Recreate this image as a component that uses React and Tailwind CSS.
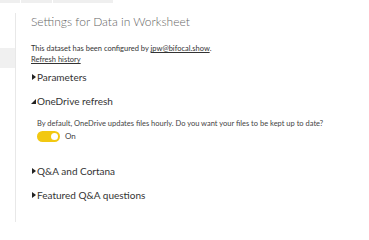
function Caret({ open }) {
  return (
    <svg width="5" height="6" viewBox="0 0 5 6" className="mr-[1px] shrink-0">
      {open ? <polygon points="5,1 5,6 0,6" fill="#222" /> : <polygon points="1,0 5,3 1,6" fill="#222" />}
    </svg>
  )
}

export default function App() {
  const font = { fontFamily: '"Segoe UI", Lato, sans-serif' }

  return (
    <div className="w-[369px] h-[222px] bg-white overflow-hidden flex flex-col" style={font}>
      {/* top tabs strip */}
      <div className="flex h-[3px] gap-px">
        <div className="w-[20px] bg-[#efefef]" />
        <div className="w-[31px] bg-[#efefef]" />
        <div className="w-[60px] bg-[#efefef]" />
      </div>

      <div className="flex flex-1 mt-[10px]">
        {/* left nav */}
        <div className="w-[16px] border-r border-[#e8e8e8]">
          <div className="mt-[35px] h-[20px] w-[15px] bg-[#f0f0f0]" />
        </div>

        {/* settings panel */}
        <div className="pl-[15px] text-[#333]">
          <h1 className="text-[12px] leading-[18px] font-light text-[#666]">Settings for Data in Worksheet</h1>
          <p className="mt-[12px] text-[7.5px] leading-[11px] text-[#333]">
            This dataset has been configured by <span className="underline">jpw@bifocal.show</span>.
          </p>
          <p className="text-[7.5px] leading-[11px] underline text-[#333]">Refresh history</p>

          <div className="mt-[5px] flex items-center h-[14px] text-[10px] text-[#333]">
            <Caret />Parameters
          </div>

          <div className="mt-[10px] flex items-center h-[14px] text-[10px] text-[#333]">
            <Caret open />OneDrive refresh
          </div>

          <div className="pl-[6px]">
            <p className="mt-[11px] text-[7.5px] leading-[10px] text-[#444]">
              By default, OneDrive updates files hourly. Do you want your files to be kept up to date?
            </p>
            <div className="mt-[1px] flex items-center gap-[5px]">
              <div className="w-[23px] h-[11px] rounded-full bg-[#f2c811] flex items-center justify-end pr-[2px]">
                <div className="w-[7px] h-[7px] rounded-full bg-white" />
              </div>
              <span className="text-[8px] text-[#444]">On</span>
            </div>
          </div>

          <div className="mt-[22px] flex items-center h-[14px] text-[10px] text-[#333]">
            <Caret />Q&amp;A and Cortana
          </div>

          <div className="mt-[10px] flex items-center h-[14px] text-[10px] text-[#333]">
            <Caret />Featured Q&amp;A questions
          </div>
        </div>
      </div>
    </div>
  )
}
